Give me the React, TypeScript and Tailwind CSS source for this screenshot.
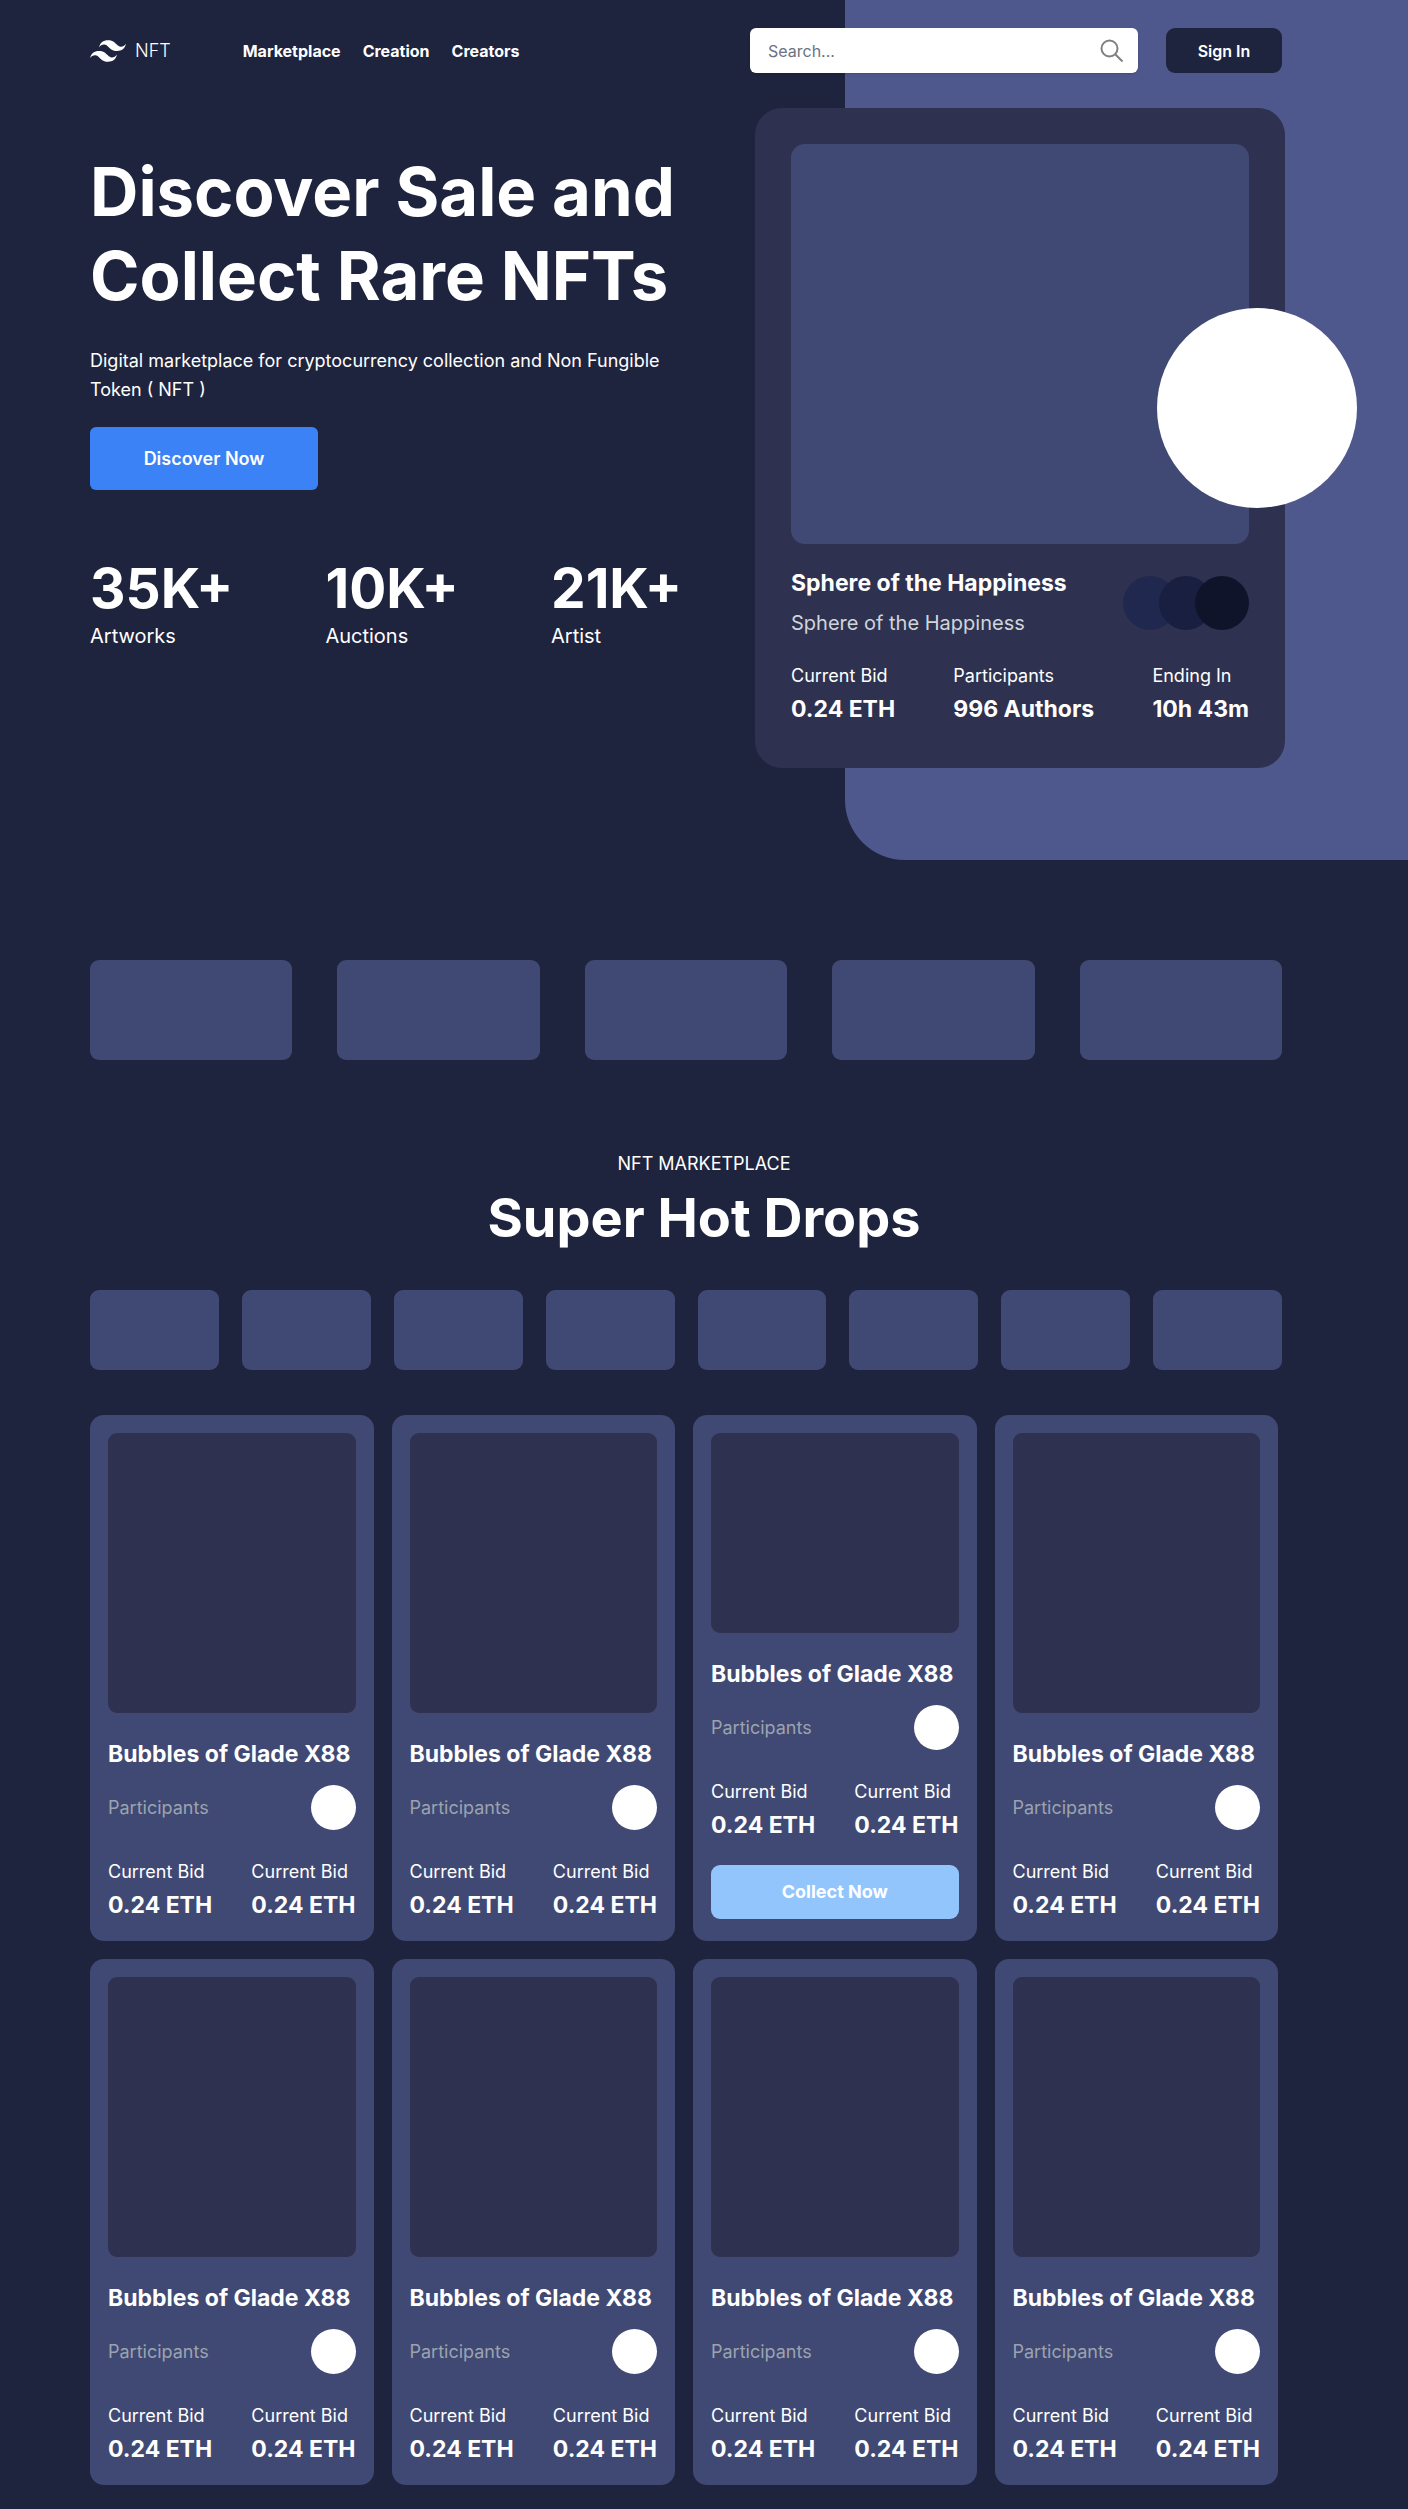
import type { ReactNode } from "react";
import { SiTailwindcss } from "react-icons/si";

function Stat({ label, value }: { label: string; value: string }) {
  return (
    <div>
      <p className="text-lg leading-[28px]">{label}</p>
      <p className="mt-1 text-[23px] leading-[30px] font-bold">{value}</p>
    </div>
  );
}

function Figure({ value, label }: { value: string; label: string }) {
  return (
    <div>
      <p className="text-[55px] leading-[60px] font-bold">{value}</p>
      <p className="mt-0.5 text-xl leading-[32px]">{label}</p>
    </div>
  );
}

function NftCard({ collect = false }: { collect?: boolean }) {
  return (
    <article className="flex flex-col rounded-[14px] bg-[#404973] px-[18px] pt-[18px] pb-[21px]">
      <div className={collect ? "h-[200px] rounded-[9px] bg-[#2e3250]" : "h-[280px] rounded-[9px] bg-[#2e3250]"} />
      <h3 className="mt-[26px] text-[23px] leading-[30px] font-bold whitespace-nowrap">Bubbles of Glade X88</h3>
      <div className="mt-4 flex items-center justify-between">
        <p className="text-lg text-[#9ca3af]">Participants</p>
        <div className="size-[45px] rounded-full bg-white" />
      </div>
      <div className="mt-7 flex justify-between">
        <Stat label="Current Bid" value="0.24 ETH" />
        <Stat label="Current Bid" value="0.24 ETH" />
      </div>
      {collect && (
        <button type="button" className="mt-[25px] h-[54px] rounded-[9px] bg-[#93c5fd] text-lg font-bold">
          Collect Now
        </button>
      )}
    </article>
  );
}

function NavLink({ children }: { children: ReactNode }) {
  return <a href="#" className="text-base font-bold">{children}</a>;
}

export default function App() {
  return (
    <div className="relative bg-[#1f243e] pr-[126px] pb-6 pl-[90px] font-['Inter',sans-serif] text-white">
      <div className="absolute top-0 right-0 h-[860px] w-2/5 rounded-bl-[60px] bg-[#4f588c]" />

      <div className="relative">
        <header className="flex items-center pt-7">
          <a href="#" className="flex items-center gap-[9px] text-lg font-light">
            <SiTailwindcss className="size-9" />
            NFT
          </a>
          <nav className="ml-[72px] flex gap-[22px]">
            <NavLink>Marketplace</NavLink>
            <NavLink>Creation</NavLink>
            <NavLink>Creators</NavLink>
          </nav>
          <label className="ml-auto flex h-[45px] w-[388px] items-center rounded-md bg-white pr-[14px] pl-[18px] shadow-sm">
            <input
              type="text"
              aria-label="Search"
              placeholder="Search..."
              className="min-w-0 flex-1 text-base text-gray-800 outline-none placeholder:text-[#6b7280]"
            />
            <svg viewBox="0 0 24 24" className="size-6 text-[#808080]" fill="none" stroke="currentColor" strokeWidth="2" aria-hidden="true">
              <circle cx="9.5" cy="9.5" r="8" />
              <path d="M15.2 15.2l7.3 7.3" />
            </svg>
          </label>
          <button type="button" className="ml-7 h-[45px] w-[116px] rounded-[9px] bg-[#1f243e] text-base font-semibold">
            Sign In
          </button>
        </header>

        <section className="mt-[35px] flex items-start justify-between">
          <div className="w-[592px] pt-[42px]">
            <h1 className="text-[67px] leading-[84px] font-bold whitespace-nowrap">
              Discover Sale and
              <br />
              Collect Rare NFTs
            </h1>
            <p className="mt-7 text-lg leading-[29px]">
              Digital marketplace for cryptocurrency collection and Non Fungible Token ( NFT )
            </p>
            <button type="button" className="mt-[23px] h-[63px] w-[228px] rounded-md bg-[#3b82f6] text-lg font-semibold">
              Discover Now
            </button>
            <div className="mt-[68px] flex justify-between">
              <Figure value="35K+" label="Artworks" />
              <Figure value="10K+" label="Auctions" />
              <Figure value="21K+" label="Artist" />
            </div>
          </div>

          <article className="-mr-[3px] w-[530px] rounded-[27px] bg-[#2e3250] px-9 pt-9 pb-11">
            <div className="relative h-[400px] rounded-[14px] bg-[#404973]">
              <div className="absolute right-[-108px] bottom-9 size-[200px] rounded-full bg-white" />
            </div>
            <div className="mt-6 flex items-center justify-between">
              <div>
                <h2 className="text-[23px] leading-[30px] font-bold">Sphere of the Happiness</h2>
                <p className="mt-[11px] text-xl leading-[28px] text-[#d1d5db]">Sphere of the Happiness</p>
              </div>
              <div className="flex -space-x-[18px]">
                <div className="size-[54px] rounded-full bg-[#20284f]" />
                <div className="size-[54px] rounded-full bg-[#191f41]" />
                <div className="size-[54px] rounded-full bg-[#10142a]" />
              </div>
            </div>
            <div className="mt-[25px] flex justify-between">
              <Stat label="Current Bid" value="0.24 ETH" />
              <Stat label="Participants" value="996 Authors" />
              <Stat label="Ending In" value="10h 43m" />
            </div>
          </article>
        </section>

        <section className="mt-48 grid grid-cols-5 gap-[45px]">
          {Array.from({ length: 5 }, (_, i) => (
            <div key={i} className="h-[100px] rounded-[9px] bg-[#404973]" />
          ))}
        </section>

        <section className="mt-[90px]">
          <div className="-mr-9 text-center">
            <p className="text-lg leading-[27px]">NFT MARKETPLACE</p>
            <h2 className="mt-[9px] text-[54px] leading-[64px] font-bold">Super Hot Drops</h2>
          </div>
          <div className="mt-10 grid grid-cols-8 gap-[23px]">
            {Array.from({ length: 8 }, (_, i) => (
              <div key={i} className="h-20 rounded-[9px] bg-[#404973]" />
            ))}
          </div>
          <div className="mt-[45px] mr-1 grid grid-cols-4 gap-[18px]">
            {Array.from({ length: 8 }, (_, i) => (
              <NftCard key={i} collect={i === 2} />
            ))}
          </div>
        </section>
      </div>
    </div>
  );
}
